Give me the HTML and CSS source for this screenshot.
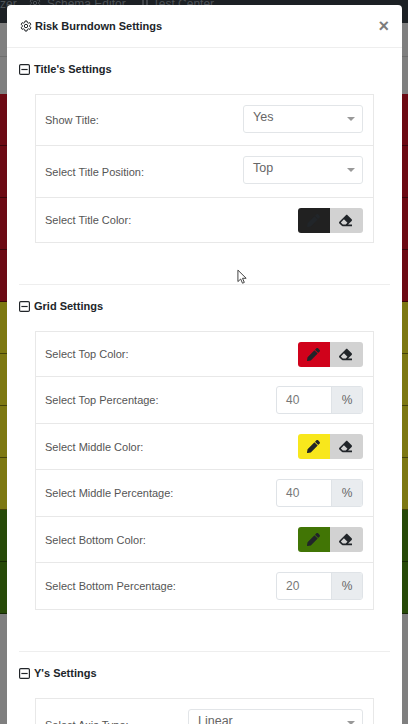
FILE: index.html
```html
<!DOCTYPE html>
<html lang="en">
<head>
  <meta charset="UTF-8">
  <title>Risk Burndown Settings</title>
  <link rel="stylesheet" href="styles.css">
</head>
<body>
  <svg width="0" height="0" class="icon-defs">
    <symbol id="i-pencil" viewBox="0 0 512 512"><path d="M497.9 142.1l-46.1 46.1c-4.7 4.7-12.3 4.7-17 0l-111-111c-4.7-4.7-4.7-12.3 0-17l46.1-46.1c18.7-18.7 49.1-18.7 67.9 0l60.1 60.1c18.8 18.7 18.8 49.1 0 67.9zM284.2 99.8L21.6 362.4.4 483.9c-2.9 16.4 11.4 30.6 27.8 27.8l121.5-21.3 262.6-262.6c4.7-4.7 4.7-12.3 0-17l-111-111c-4.8-4.7-12.4-4.7-17.1 0z"/></symbol>
    <symbol id="i-eraser" viewBox="0 0 512 512"><path d="M497.941 273.941c18.745-18.745 18.745-49.137 0-67.882l-160-160c-18.745-18.745-49.137-18.745-67.882 0l-256 256c-18.745 18.745-18.745 49.137 0 67.882l96 96A48.004 48.004 0 0 0 144 480h356c6.627 0 12-5.373 12-12v-40c0-6.627-5.373-12-12-12H355.883l142.058-142.059zm-302.627-62.627l137.373 137.373L265.373 416H150.628l-80-80 124.686-124.686z"/></symbol>
    <symbol id="i-minus" viewBox="0 0 14 14"><rect x="0.75" y="0.75" width="12.5" height="12.500" rx="1.500" fill="none" stroke="currentColor" stroke-width="1.500"/><rect x="3" y="6.250" width="8" height="1.500" fill="currentColor"/></symbol>
    <symbol id="i-gear" viewBox="0 0 24 24"><path fill="none" stroke="currentColor" stroke-width="2" stroke-linejoin="round" d="M10 2h4l.6 3 2.200 1.300 2.900-1 2 3.400-2.300 2v2.600l2.300 2-2 3.400-2.900-1L14.600 19 14 22h-4l-.6-3-2.200-1.300-2.900 1-2-3.400 2.300-2v-2.600l-2.300-2 2-3.400 2.900 1L9.400 5z"/><circle cx="12" cy="12" r="3.400" fill="none" stroke="currentColor" stroke-width="2"/></symbol>
  </svg>

  <!-- Page behind the dialog -->
  <div class="backdrop">
    <div class="topbar">
      <span class="topbar-first">zer</span>
      <svg class="topbar-icon"><use href="#i-gear"/></svg>
      <span>Schema Editor</span>
      <svg class="topbar-icon-test" viewBox="0 0 8 12"><path d="M2 0v9a2 2 0 0 0 4 0V0" fill="none" stroke="currentColor" stroke-width="1.500"/></svg>
      <span>Test Center</span>
    </div>
    <div class="sub-bar"></div>
    <div class="sub-bar sub-bar-low"></div>
    <div class="band band-red"></div>
    <div class="band band-red"></div>
    <div class="band band-red"></div>
    <div class="band band-red"></div>
    <div class="band band-yellow"></div>
    <div class="band band-yellow"></div>
    <div class="band band-yellow"></div>
    <div class="band band-yellow"></div>
    <div class="band band-green"></div>
    <div class="band band-green"></div>
  </div>

  <!-- Dialog -->
  <div class="modal">
    <div class="modal-header">
      <svg class="gear"><use href="#i-gear"/></svg>
      <span class="modal-title">Risk Burndown Settings</span>
      <span class="close">×</span>
    </div>

    <div class="modal-body">
      <section class="group">
        <h4 class="group-title"><svg class="toggle"><use href="#i-minus"/></svg>Title's Settings</h4>
        <div class="panel">
          <div class="row row-select">
            <label>Show Title:</label>
            <div class="select">Yes</div>
          </div>
          <div class="row row-select">
            <label>Select Title Position:</label>
            <div class="select">Top</div>
          </div>
          <div class="row row-short">
            <label>Select Title Color:</label>
            <div class="color-btns">
              <span class="swatch swatch-black"><svg><use href="#i-pencil"/></svg></span>
              <span class="eraser"><svg><use href="#i-eraser"/></svg></span>
            </div>
          </div>
        </div>
      </section>

      <hr class="divider">

      <section class="group">
        <h4 class="group-title"><svg class="toggle"><use href="#i-minus"/></svg>Grid Settings</h4>
        <div class="panel panel-grid">
          <div class="row">
            <label>Select Top Color:</label>
            <div class="color-btns">
              <span class="swatch swatch-red"><svg><use href="#i-pencil"/></svg></span>
              <span class="eraser"><svg><use href="#i-eraser"/></svg></span>
            </div>
          </div>
          <div class="row">
            <label>Select Top Percentage:</label>
            <div class="percent"><span class="percent-value">40</span><span class="percent-unit">%</span></div>
          </div>
          <div class="row">
            <label>Select Middle Color:</label>
            <div class="color-btns">
              <span class="swatch swatch-yellow"><svg><use href="#i-pencil"/></svg></span>
              <span class="eraser"><svg><use href="#i-eraser"/></svg></span>
            </div>
          </div>
          <div class="row">
            <label>Select Middle Percentage:</label>
            <div class="percent"><span class="percent-value">40</span><span class="percent-unit">%</span></div>
          </div>
          <div class="row">
            <label>Select Bottom Color:</label>
            <div class="color-btns">
              <span class="swatch swatch-green"><svg><use href="#i-pencil"/></svg></span>
              <span class="eraser"><svg><use href="#i-eraser"/></svg></span>
            </div>
          </div>
          <div class="row">
            <label>Select Bottom Percentage:</label>
            <div class="percent"><span class="percent-value">20</span><span class="percent-unit">%</span></div>
          </div>
        </div>
      </section>

      <hr class="divider">

      <section class="group">
        <h4 class="group-title"><svg class="toggle"><use href="#i-minus"/></svg>Y's Settings</h4>
        <div class="panel">
          <div class="row row-select">
            <label>Select Axis Type:</label>
            <div class="select select-wide">Linear</div>
          </div>
        </div>
      </section>
    </div>
  </div>

  <!-- Mouse pointer caught in the screenshot -->
  <svg class="cursor" viewBox="0 0 12 17"><path d="M1 1v12.500l3-2.800 2 4.600 2-.9-2-4.500h4z" fill="#fff" stroke="#333" stroke-width="1"/></svg>
</body>
</html>
```

FILE: styles.css
```css
/* General Styles */
* {
  box-sizing: border-box;
}

html,
body {
  margin: 0;
  height: 100%;
  overflow: hidden;
}

body {
  position: relative;
  font-family: "Liberation Sans", Arial, sans-serif;
  color: #212529;
  background-color: #7f7f7f;
}

.icon-defs {
  position: absolute;
}

/* Page behind the dialog */
.backdrop {
  display: flex;
  flex-direction: column;
  height: 100%;
}

.topbar {
  height: 23px;
  flex-shrink: 0;
  display: flex;
  align-items: flex-start;
  background-color: #1c2024;
  color: #4d5257;
  font-size: 12px;
  line-height: 8px;
}

.topbar-first {
  width: 29px;
}

.topbar-icon {
  width: 12px;
  height: 12px;
  margin: -3px 6px 0 0;
}

.topbar-icon-test {
  width: 8px;
  height: 12px;
  margin: -3px 4px 0 15px;
}

.sub-bar {
  height: 34px;
  flex-shrink: 0;
  background-color: #7f7f7f;
  border-bottom: 1px solid #6e6e6e;
}

.sub-bar-low {
  height: 37px;
  border-bottom: none;
}

.band {
  height: 52px;
  flex-shrink: 0;
  border-bottom: 1px solid rgba(0, 0, 0, 0.45);
}

.band-red {
  background-color: #6c0a14;
}

.band-yellow {
  background-color: #7d7812;
}

.band-green {
  background-color: #274a08;
}

/* Dialog */
.modal {
  position: absolute;
  top: 5px;
  left: 7px;
  width: 395px;
  height: 719px;
  overflow: hidden;
  background: white;
  border-radius: 4px 4px 0 0;
}

.modal-header {
  display: flex;
  align-items: center;
  height: 43px;
  padding: 0 13px;
  border-bottom: 1px solid #eeeeee;
}

.gear {
  width: 12px;
  height: 12px;
  margin-right: 3px;
}

.modal-title {
  font-size: 11px;
  font-weight: bold;
}

.close {
  margin-left: auto;
  font-size: 18px;
  font-weight: bold;
  color: #7d7d7d;
}

.modal-body {
  padding: 13px 12px 0;
}

.group-title {
  display: flex;
  align-items: center;
  margin: 0 0 17px;
  font-size: 11px;
  font-weight: bold;
  line-height: 16px;
}

.toggle {
  width: 11px;
  height: 11px;
  margin-right: 4px;
}

.panel {
  margin: 0 16px;
  border: 1px solid #e8e8e8;
}

.row {
  display: flex;
  align-items: center;
  justify-content: space-between;
  padding: 0 10px 0 9px;
  border-bottom: 1px solid #e8e8e8;
  font-size: 11px;
  color: #555;
}

.row:last-child {
  border-bottom: none;
}

.panel-grid .row {
  height: 46px;
}

.panel-grid .row:nth-child(even) {
  height: 47px;
}

.panel-grid .row:first-child {
  height: 45px;
}

.panel-grid .row:last-child {
  height: 46px;
}

.row-select {
  height: 51px;
}

.row-select + .row-select {
  height: 52px;
}

.row-short {
  height: 44px;
}

.select {
  position: relative;
  width: 120px;
  height: 28px;
  margin-top: -3px;
  padding: 3px 9px;
  border: 1px solid #e2e5e8;
  border-radius: 3px;
  font-size: 12.500px;
  line-height: 17px;
  color: #666;
}

.select-wide {
  width: 175px;
}

.select::after {
  content: "";
  position: absolute;
  top: 11px;
  right: 7px;
  border-left: 4px solid transparent;
  border-right: 4px solid transparent;
  border-top: 4px solid #999;
}

.color-btns {
  display: flex;
  width: 65px;
  height: 25px;
  border-radius: 3px;
  overflow: hidden;
}

.color-btns span {
  display: flex;
  align-items: center;
  justify-content: center;
  width: 32px;
  padding-right: 2px;
}

.color-btns .eraser {
  width: 33px;
}

.color-btns svg {
  width: 13px;
  height: 13px;
  fill: #212529;
}

.swatch-black {
  background-color: #212121;
}

.swatch-red {
  background-color: #d0021b;
}

.swatch-yellow {
  background-color: #f8e71c;
}

.swatch-green {
  background-color: #417505;
}

.eraser {
  background-color: #d2d2d2;
}

.percent {
  display: flex;
  width: 87px;
  height: 28px;
  border: 1px solid #dfe3e7;
  border-radius: 3px;
  overflow: hidden;
  font-size: 12px;
  line-height: 26px;
  color: #777;
}

.percent-value {
  flex: 1;
  padding-left: 9px;
}

.percent-unit {
  width: 31px;
  text-align: center;
  background-color: #e9ecef;
  border-left: 1px solid #dfe3e7;
  color: #666;
}

.divider {
  margin: 41px 0 13px;
  border: none;
  border-top: 1px solid #eeeeee;
}

/* Pointer */
.cursor {
  position: absolute;
  top: 269px;
  left: 237px;
  width: 11px;
  height: 16px;
}
```
